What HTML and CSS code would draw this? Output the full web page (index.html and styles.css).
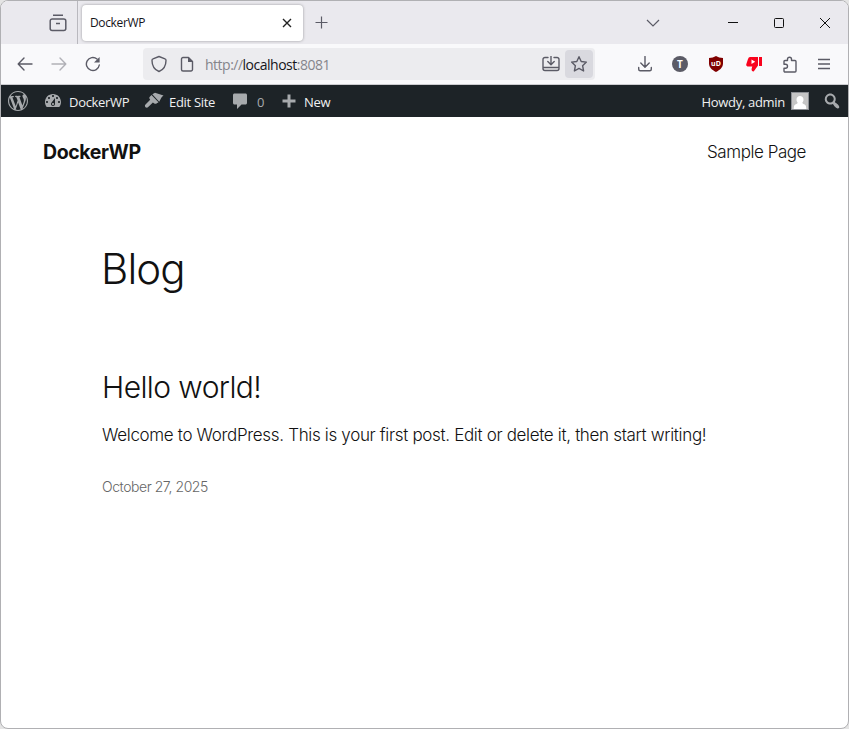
FILE: index.html
```html
<!DOCTYPE html>
<html lang="en">
<head>
<meta charset="utf-8">
<title>DockerWP</title>
<link rel="stylesheet" href="styles.css">
</head>
<body>
<div class="window">
  <header class="tabstrip">
    <button class="btn archive" aria-label="Tab overview"><svg width="18" height="18" viewBox="0 0 18 18"><path d="M4 1.200h10M3.200 5h11.600a2 2 0 0 1 2 2v7.500a2 2 0 0 1-2 2H3.200a2 2 0 0 1-2-2V7a2 2 0 0 1 2-2zM7 9.500h4"/></svg></button>
    <div class="tab"><span class="tab-title">DockerWP</span><svg width="10" height="10" viewBox="0 0 10 10"><path d="M1 1l8 8M9 1L1 9"/></svg></div>
    <svg class="plus" width="13" height="13" viewBox="0 0 13 13"><path d="M6.500 .5v12M.5 6.500h12"/></svg>
    <svg class="chev" width="14" height="8" viewBox="0 0 14 8"><path d="M1 1l6 6 6-6"/></svg>
    <svg class="win min" width="10" height="10" viewBox="0 0 10 10"><path d="M0 4.500h10"/></svg>
    <svg class="win max" width="10" height="10" viewBox="0 0 10 10"><rect x=".5" y=".5" width="9" height="9" rx="1"/></svg>
    <svg class="win close" width="10" height="10" viewBox="0 0 10 10"><path d="M0 0l10 10M10 0L0 10"/></svg>
  </header>
  <nav class="toolbar">
    <svg class="ic back" width="16" height="16" viewBox="0 0 16 16"><path d="M15 8H1.500M7 2L1.200 8 7 14"/></svg>
    <svg class="ic forward" width="16" height="16" viewBox="0 0 16 16"><path d="M1 8h13.500M9 2l5.800 6L9 14"/></svg>
    <svg class="ic reload" width="16" height="16" viewBox="0 0 16 16"><path d="M14.300 9A6.500 6.500 0 1 1 12 3"/><path class="solid" d="M14.600 1v5.500H9z"/></svg>
    <div class="urlbar">
      <svg class="ic" width="16" height="18" viewBox="0 0 16 18"><path d="M8 1.500l6 2.300c.9.300 1 .8 1 1.600 0 4.600-2 9-7 11.100C3 14.400 1 10 1 5.400c0-.8.1-1.300 1-1.600z"/></svg>
      <svg class="ic page" width="14" height="16" viewBox="0 0 14 16"><path d="M8.500 1.500H3A1.500 1.500 0 0 0 1.500 3v10.500A1.500 1.500 0 0 0 3 15h8a1.500 1.500 0 0 0 1.500-1.500v-8z"/><path class="solid" d="M8 1v5h5z"/></svg>
      <span class="url">http://<b>localhost</b>:8081</span>
      <svg class="ic install" width="18" height="16" viewBox="0 0 18 16"><path d="M6 1.500H3a2 2 0 0 0-2 2v9a2 2 0 0 0 2 2h12a2 2 0 0 0 2-2v-9a2 2 0 0 0-2-2h-3M1 11.500h16M9 0v8.500M5.800 5.500L9 8.700l3.200-3.200"/></svg>
      <span class="star"><svg class="ic" width="18" height="18" viewBox="0 0 18 18"><path d="M9 1.700l2.200 4.800 5.200.6-3.800 3.600 1 5.300L9 13.400 4.400 16l1-5.300-3.800-3.600 5.200-.6z"/></svg></span>
    </div>
    <svg class="ic download" width="14" height="16" viewBox="0 0 14 16"><path d="M7 .5v10.500M2.800 7L7 11.200 11.200 7M.7 11.500v1.800a1.500 1.500 0 0 0 1.500 1.500h9.600a1.500 1.500 0 0 0 1.500-1.500v-1.800"/></svg>
    <span class="account">T</span>
    <svg class="ublock" width="16" height="16" viewBox="0 0 16 16"><path fill="#800000" d="M8 0c2 1.300 4.300 2 7 2v5.500c0 3.800-3 6.500-7 8.500-4-2-7-4.700-7-8.500V2c2.700 0 5-.7 7-2z"/><text x="8" y="9.800" text-anchor="middle">uD</text></svg>
    <svg class="dislike" width="16" height="16" viewBox="0 0 16 16"><path fill="#f9031d" d="M4 1h8v8.500l-4.300 6c-2-.2-2.400-1.500-2-3l.6-2H1.500Q0 10 .2 8.500L2 3Q2.600 1 4 1zM13 1h3v9h-3z"/><path fill="#fff" d="M5.500 3.500L9.200 5.700 5.500 8z"/></svg>
    <svg class="ic ext" width="16" height="17" viewBox="0 0 16 17"><path d="M5.500 4.500V3.200a2 2 0 0 1 4 0v1.300H13a1 1 0 0 1 1 1V15a1 1 0 0 1-1 1H3a1 1 0 0 1-1-1v-2.700h1.500a2 2 0 0 0 0-4H2V5.500a1 1 0 0 1 1-1z"/></svg>
    <svg class="ic menu" width="12" height="12" viewBox="0 0 12 12"><path d="M0 1.500h12M0 6h12M0 10.500h12"/></svg>
  </nav>
  <nav class="adminbar">
    <svg class="wp" width="20" height="20" viewBox="0 0 20 20"><path d="M20 10c0-5.510-4.490-10-10-10C4.480 0 0 4.490 0 10c0 5.520 4.480 10 10 10 5.510 0 10-4.480 10-10zM7.780 15.370L4.370 6.220c.55-.02 1.170-.08 1.170-.08.5-.06.44-1.130-.06-1.110 0 0-1.450.11-2.370.11-.18 0-.37 0-.58-.01C4.120 2.690 6.870 1.110 10 1.110c2.330 0 4.450.87 6.050 2.340-.68-.11-1.650.39-1.650 1.580 0 .74.45 1.360.9 2.100.35.61.55 1.360.55 2.460 0 1.490-1.400 5-1.400 5l-3.030-8.370c.54-.02.82-.17.82-.17.5-.05.44-1.250-.06-1.220 0 0-1.440.12-2.380.12-.87 0-2.330-.12-2.330-.12-.5-.03-.56 1.200-.06 1.220l.92.08 1.260 3.410zM17.410 10c.24-.64.74-1.870.43-4.250.7 1.290 1.050 2.710 1.050 4.250 0 3.290-1.730 6.240-4.400 7.780.97-2.590 1.940-5.200 2.920-7.780zM6.100 18.090C3.120 16.650 1.110 13.530 1.110 10c0-1.300.23-2.480.72-3.590C3.250 10.300 4.670 14.200 6.100 18.090zm4.030-6.630l2.580 6.980c-.86.29-1.760.45-2.710.45-.79 0-1.570-.11-2.290-.33.81-2.380 1.620-4.740 2.420-7.100z"/></svg>
    <svg class="dash" width="20" height="20" viewBox="0 0 20 20"><path d="M3.760 16h12.480c1.100-1.370 1.760-3.110 1.760-5 0-4.420-3.580-8-8-8s-8 3.580-8 8c0 1.890.66 3.630 1.760 5zM10 4c.55 0 1 .45 1 1s-.45 1-1 1-1-.45-1-1 .45-1 1-1zM6 6c.55 0 1 .45 1 1s-.45 1-1 1-1-.45-1-1 .45-1 1-1zm8 0c.55 0 1 .45 1 1s-.45 1-1 1-1-.45-1-1 .45-1 1-1zm-5.370 5.550L12 7v6c0 1.100-.9 2-2 2s-2-.9-2-2c0-.57.24-1.080.63-1.450zM4 10c.55 0 1 .45 1 1s-.45 1-1 1-1-.45-1-1 .45-1 1-1zm12 0c.55 0 1 .45 1 1s-.45 1-1 1-1-.45-1-1 .45-1 1-1zm-5 3c0-.55-.45-1-1-1s-1 .45-1 1 .45 1 1 1 1-.45 1-1z"/></svg>
    <span class="label site">DockerWP</span>
    <svg class="brush" width="20" height="20" viewBox="0 0 20 20"><path d="M8.300 3.200l6.900 7.600c1.300-1.800 1.500-4.200 4.300-6.200L11 1.800zM7.500 4L5.600 6c-.6.900-.3 1.700.6 2.700L1.500 13.400c-1.800 1.700.8 4.600 2.700 2.700l4.700-4.600c1.600 1.300 2.500 1.700 3.600.9l2-1.200z"/></svg>
    <span class="label edit">Edit Site</span>
    <svg class="comment" width="20" height="20" viewBox="0 0 20 20"><path d="M4.500 2.500h11c.8 0 1.500.7 1.500 1.500v8c0 .8-.7 1.500-1.500 1.500h-4L7 18v-4.500H4.500c-.8 0-1.500-.7-1.500-1.500V4c0-.8.7-1.500 1.500-1.500z"/></svg>
    <span class="label count">0</span>
    <svg class="add" width="14" height="14" viewBox="0 0 14 14"><path d="M5.500 .5h3v5h5v3h-5v5h-3v-5h-5v-3h5z"/></svg>
    <span class="label new">New</span>
    <span class="label howdy">Howdy, admin</span>
    <svg class="avatar" width="18" height="18" viewBox="0 0 18 18"><path fill="#8c8f94" d="M0 0h18v18H0z"/><path fill="#c5c5c5" d="M1 1h16v16H1z"/><path fill="#fff" d="M9 4c2 0 3.500 1.500 3.500 3.500 0 1.300-.5 2.500-1.200 3.200.2 1.500 3.200 1.300 3.700 3.500L15.300 17H2.700l.3-2.800c.5-2.200 3.500-2 3.700-3.500-.7-.7-1.200-1.900-1.200-3.200C5.500 5.500 7 4 9 4z"/></svg>
    <svg class="search" width="20" height="20" viewBox="0 0 20 20"><path d="M12.140 4.180c1.870 1.870 2.110 4.750.72 6.890.12.1.22.21.36.31.2.16.47.36.81.59.34.24.56.39.66.47.42.31.73.57.94.78.32.32.6.65.84 1 .25.35.44.69.59 1.040.14.35.21.68.18 1-.02.32-.14.59-.36.81s-.49.34-.81.36c-.31.02-.65-.04-.99-.19-.35-.14-.7-.34-1.040-.59-.35-.24-.68-.52-1-.84-.21-.21-.47-.52-.77-.93-.1-.13-.25-.35-.47-.66-.22-.32-.4-.57-.56-.78-.16-.2-.29-.35-.44-.5-2.070 1.090-4.690.76-6.440-.98-2.140-2.150-2.140-5.640 0-7.780 2.150-2.150 5.630-2.150 7.780 0zm-1.410 6.360c1.360-1.370 1.360-3.580 0-4.950-1.370-1.370-3.590-1.370-4.950 0-1.370 1.370-1.370 3.580 0 4.950 1.360 1.370 3.580 1.370 4.950 0z"/></svg>
  </nav>
  <main class="page-body">
    <div class="site-header"><strong class="brand">DockerWP</strong><a class="sample">Sample Page</a></div>
    <section class="content">
      <h1>Blog</h1>
      <article>
        <h2>Hello world!</h2>
        <p>Welcome to WordPress. This is your first post. Edit or delete it, then start writing!</p>
        <time>October 27, 2025</time>
      </article>
    </section>
  </main>
</div>
</body>
</html>
```
FILE: styles.css
```css
* { box-sizing: border-box; }
body { margin: 0; background: #e4e4e4; font-family: "Open Sans", "Noto Sans", sans-serif; }
svg { display: block; flex: none; }
span, strong, a, time, h1, h2, p { white-space: nowrap; }
.window { width: 849px; height: 729px; border: 1px solid #b0b0b3; border-radius: 8px; background: #fff; overflow: hidden; }

.tabstrip { height: 43px; display: flex; align-items: center; background: #eae9ee; }
.tabstrip svg { fill: none; stroke: #5b5b66; stroke-width: 1.2; }
.btn { border: 0; border-right: 1px solid #b9b8be; background: none; padding: 0 0 0 48px; width: 77px; height: 43px; flex: none; }
.archive svg { stroke-width: 1.5; }
.tab { width: 221px; height: 36px; margin-left: 4px; padding: 0 11px 0 8px; display: flex; align-items: center; justify-content: space-between; background: #fff; border-radius: 4px; box-shadow: 0 0 3px rgba(0, 0, 0, .35); font-size: 12px; color: #15141a; }
.tab-title { letter-spacing: -.35px; }
.tab svg { stroke: #222; stroke-width: 1.4; }
.plus { margin-left: 12px; }
.chev { margin-left: 318px; }
.tabstrip .win { stroke: #111; stroke-width: 1; }
.min { margin-left: 68px; }
.max, .close { margin-left: 36px; }

.toolbar { height: 41px; display: flex; align-items: center; background: #f9f9fb; border-bottom: 1px solid #ccccd0; }
.ic { fill: none; stroke: #5b5b66; stroke-width: 1.4; stroke-linecap: round; stroke-linejoin: round; }
.ic .solid { fill: #5b5b66; stroke: none; }
.back { margin-left: 16px; }
.forward { margin-left: 18px; opacity: .45; }
.reload { margin-left: 18px; }
.urlbar { width: 452px; height: 32px; margin-left: 42px; padding: 0 2px 0 8px; display: flex; align-items: center; background: #ececef; border-radius: 4px; }
.page { margin-left: 13px; }
.url { margin-left: 11px; font-size: 14px; color: #85858b; letter-spacing: -.5px; }
.url b { font-weight: 400; color: #15141a; }
.install { margin-left: auto; }
.star { width: 28px; height: 28px; margin-left: 5px; display: flex; align-items: center; justify-content: center; background: #d9d9df; border-radius: 4px; }
.download { margin-left: 43px; }
.account { width: 16px; height: 16px; margin-left: 20px; border-radius: 50%; background: #5b5b66; color: #fff; font-size: 10px; font-weight: 700; line-height: 16px; text-align: center; }
.ublock { margin-left: 20px; }
.ublock text { font: 700 7px "Open Sans", sans-serif; fill: #fff; }
.dislike { margin-left: 22px; }
.ext { margin-left: 20px; }
.menu { margin-left: 20px; }

.adminbar { height: 32px; display: flex; align-items: center; background: #1d2327; color: #f0f0f1; font-size: 13px; }
.adminbar svg { fill: #a7aaad; }
.label { padding-top: 2px; letter-spacing: -.3px; }
.wp { margin-left: 7px; }
.dash { margin-left: 15px; }
.site { width: 61px; margin-left: 6px; }
.brush { margin-left: 14px; }
.edit { width: 48px; margin-left: 5px; }
.comment { margin-left: 13px; }
.label.count { width: 8px; margin-left: 7px; color: #a7aaad; }
.add { margin-left: 17px; }
.new { margin-left: 8px; }
.howdy { margin-left: auto; }
.avatar { margin-left: 6px; }
.search { margin-left: 13px; margin-right: 6px; }

.page-body { font-family: Inter, "Open Sans", sans-serif; font-weight: 300; color: #111; }
.site-header { height: 70px; padding: 0 42px; display: flex; align-items: center; justify-content: space-between; }
.brand { font-size: 19.5px; font-weight: 650; letter-spacing: -.4px; }
.sample { font-size: 17px; letter-spacing: -.45px; }
.content { padding: 53px 101px 0; }
h1 { margin: 0; font-size: 42px; line-height: 58px; font-weight: 300; letter-spacing: -.9px; text-indent: -1px; }
article { padding-top: 71px; }
h2 { margin: 0; font-size: 30px; line-height: 36px; font-weight: 300; letter-spacing: -.58px; }
p { margin: 17px 0 0; font-size: 17px; line-height: 26px; letter-spacing: -.33px; }
time { display: block; margin-top: 28px; font-size: 14px; line-height: 22px; letter-spacing: -.45px; color: #666; }
```
